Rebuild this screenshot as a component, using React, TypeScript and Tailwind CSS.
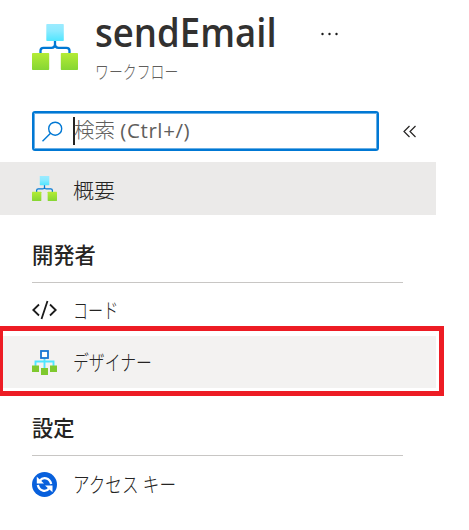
import React from 'react';

function WorkflowIcon({ size, id }: { size: number; id: string }) {
  return (
    <svg width={size} height={size} viewBox="0 0 46 46" className="block shrink-0">
      <defs>
        <linearGradient id={`${id}-top`} x1="0" y1="0" x2="0" y2="1">
          <stop offset="0" stopColor="#9cebff" />
          <stop offset=".4" stopColor="#8deaff" />
          <stop offset="1" stopColor="#50e6ff" />
        </linearGradient>
        <linearGradient id={`${id}-leaf`} x1="0" y1="0" x2="0" y2="1">
          <stop offset="0" stopColor="#b4ec36" />
          <stop offset="1" stopColor="#86d633" />
        </linearGradient>
      </defs>
      <path d="M23 16v4.5c0 2-1.500 3.300-3.500 3.300H11.500c-2 0-3 1-3 3V30M23 16v4.500c0 2 1.500 3.300 3.500 3.300H34.500c2 0 3 1 3 3V30" fill="none" stroke="#0078d4" strokeWidth="2.300" />
      <rect x="14.300" y="0" width="17.500" height="17" rx=".8" fill={`url(#${id}-top)`} />
      <rect x="0" y="29" width="17.200" height="17" rx=".8" fill={`url(#${id}-leaf)`} />
      <rect x="28.800" y="29" width="17.200" height="17" rx=".8" fill={`url(#${id}-leaf)`} />
    </svg>
  );
}

function DesignerIcon() {
  return (
    <svg width="25" height="25" viewBox="0 0 25 25" className="block">
      <path d="M12.500 8v11M3.500 16v-4.500h18V16" fill="none" stroke="#50e6ff" strokeWidth="1.900" />
      <rect x="9" y="1" width="7" height="7" fill="#fff" stroke="#1976d2" strokeWidth="1.800" />
      <g fill="#7fc92e">
        <rect x="0" y="15.500" width="7" height="6.500" />
        <rect x="9" y="18" width="7" height="7" />
        <rect x="18" y="15.500" width="7" height="6.500" />
      </g>
    </svg>
  );
}

function CodeIcon() {
  return (
    <svg width="26" height="20" viewBox="0 0 26 20" className="block" fill="none" stroke="#1b1b1b" strokeWidth="1.800">
      <path d="M7 4.500L1.300 10 7 15.500M18 4.500l5.700 5.500L18 15.500M15.500 1L9.500 19" />
    </svg>
  );
}

function KeysIcon() {
  return (
    <svg width="25" height="25" viewBox="0 0 25 25" className="block">
      <circle cx="12.500" cy="12.500" r="12.500" fill="#0860dc" />
      <g fill="none" stroke="#fff" strokeWidth="2.300">
        <path d="M8 8.500C11 4.700 17.500 5.500 19.200 12" />
        <path d="M17 16.500C14 20.300 7.500 19.500 5.800 13" />
      </g>
      <path d="M4.800 4.800v6.700h7.200zM20.500 20.200v-6.700h-7.500z" fill="#fff" />
    </svg>
  );
}

function NavRow({ icon, children }: { icon: React.ReactNode; children: React.ReactNode }) {
  return (
    <div className="flex h-full items-center pl-8">
      <div className="w-[41px] shrink-0">{icon}</div>
      {children}
    </div>
  );
}

function Heading({ children }: { children: React.ReactNode }) {
  return (
    <h2 className="ml-8 h-[53px] w-[371px] border-b border-[#c8c6c4] text-[21.300px] leading-[50px] font-medium text-[#252423]">
      {children}
    </h2>
  );
}

export default function App() {
  return (
    <main className="h-[530px] w-[469px] overflow-hidden bg-white font-['Open_Sans','Noto_Sans_CJK_JP',sans-serif] whitespace-nowrap text-[#323130]">
      <header className="flex h-[111px] pl-8">
        <div className="w-[63px] pt-6">
          <WorkflowIcon size={46} id="title" />
        </div>
        <div className="w-[225px] pt-[7px]">
          <h1 className="h-[50px] w-fit origin-left scale-x-[0.937] text-[39px] leading-[49px] font-semibold">sendEmail</h1>
          <p className="w-fit origin-left scale-x-[0.750] text-[18.500px] leading-[29px] font-light text-[#605e5c]">ワークフロー</p>
        </div>
        <svg width="20" height="6" viewBox="0 0 20 6" className="mt-[31px] block" fill="#1b1b1b">
          <circle cx="2.500" cy="3" r="1.200" />
          <circle cx="9.500" cy="3" r="1.200" />
          <circle cx="16.500" cy="3" r="1.200" />
        </svg>
      </header>

      <div className="flex h-10 items-center pl-8">
        <div className="flex h-10 w-[347px] items-center rounded-[3px] border-2 border-[#0078d4] pl-2 shadow-[inset_0_0_0_1px_#69afe5]">
          <svg width="21" height="21" viewBox="0 0 21 21" fill="none" stroke="#0078d4" strokeWidth="1.400">
            <circle cx="13.200" cy="7.700" r="6.500" />
            <path d="M8.500 12.300L.500 20.300" />
          </svg>
          <span className="ml-2.5 h-7 w-0.5 bg-[#252423]" />
          <span className="-ml-px pb-0.5 text-[20.500px] leading-7 font-light text-[#605e5c]">
            検索 <span className="tracking-[0.600px] font-normal">(Ctrl+/)</span>
          </span>
        </div>
        <svg width="14" height="13" viewBox="0 0 14 13" className="ml-6 block" fill="none" stroke="#252423" strokeWidth="1.200">
          <path d="M6.500 1L1 6.500 6.500 12M12.500 1L7 6.500l5.500 5.500" />
        </svg>
      </div>

      <nav className="text-[21px] leading-7 font-light text-[#252423]">
        <div className="mt-[11px] h-[53px] w-[436px] bg-[#ebeae9]">
          <NavRow icon={<WorkflowIcon size={25} id="overview" />}>
            <span className="pt-0.5">概要</span>
          </NavRow>
        </div>

        <div className="pt-[15px]">
          <Heading>開発者</Heading>
        </div>
        <div className="mt-[10px] h-[33px]">
          <NavRow icon={<CodeIcon />}>
            <span className="origin-left scale-x-[0.720]">コード</span>
          </NavRow>
        </div>

        <div className="h-[70px] w-[444px] border-y-[5px] border-r-[5px] border-l-[3px] border-[#ed1c24] pt-[5px]">
          <div className="h-[52px] w-[433px] bg-[#f3f2f1]">
            <div className="-ml-[3px] h-full">
              <NavRow icon={<DesignerIcon />}>
                <span className="origin-left scale-x-[0.755]">デザイナー</span>
              </NavRow>
            </div>
          </div>
        </div>

        <div className="pt-[7px]">
          <Heading>設定</Heading>
        </div>
        <div className="h-14">
          <NavRow icon={<KeysIcon />}>
            <span className="origin-left scale-x-[0.790]">アクセス キー</span>
          </NavRow>
        </div>
      </nav>
    </main>
  );
}
